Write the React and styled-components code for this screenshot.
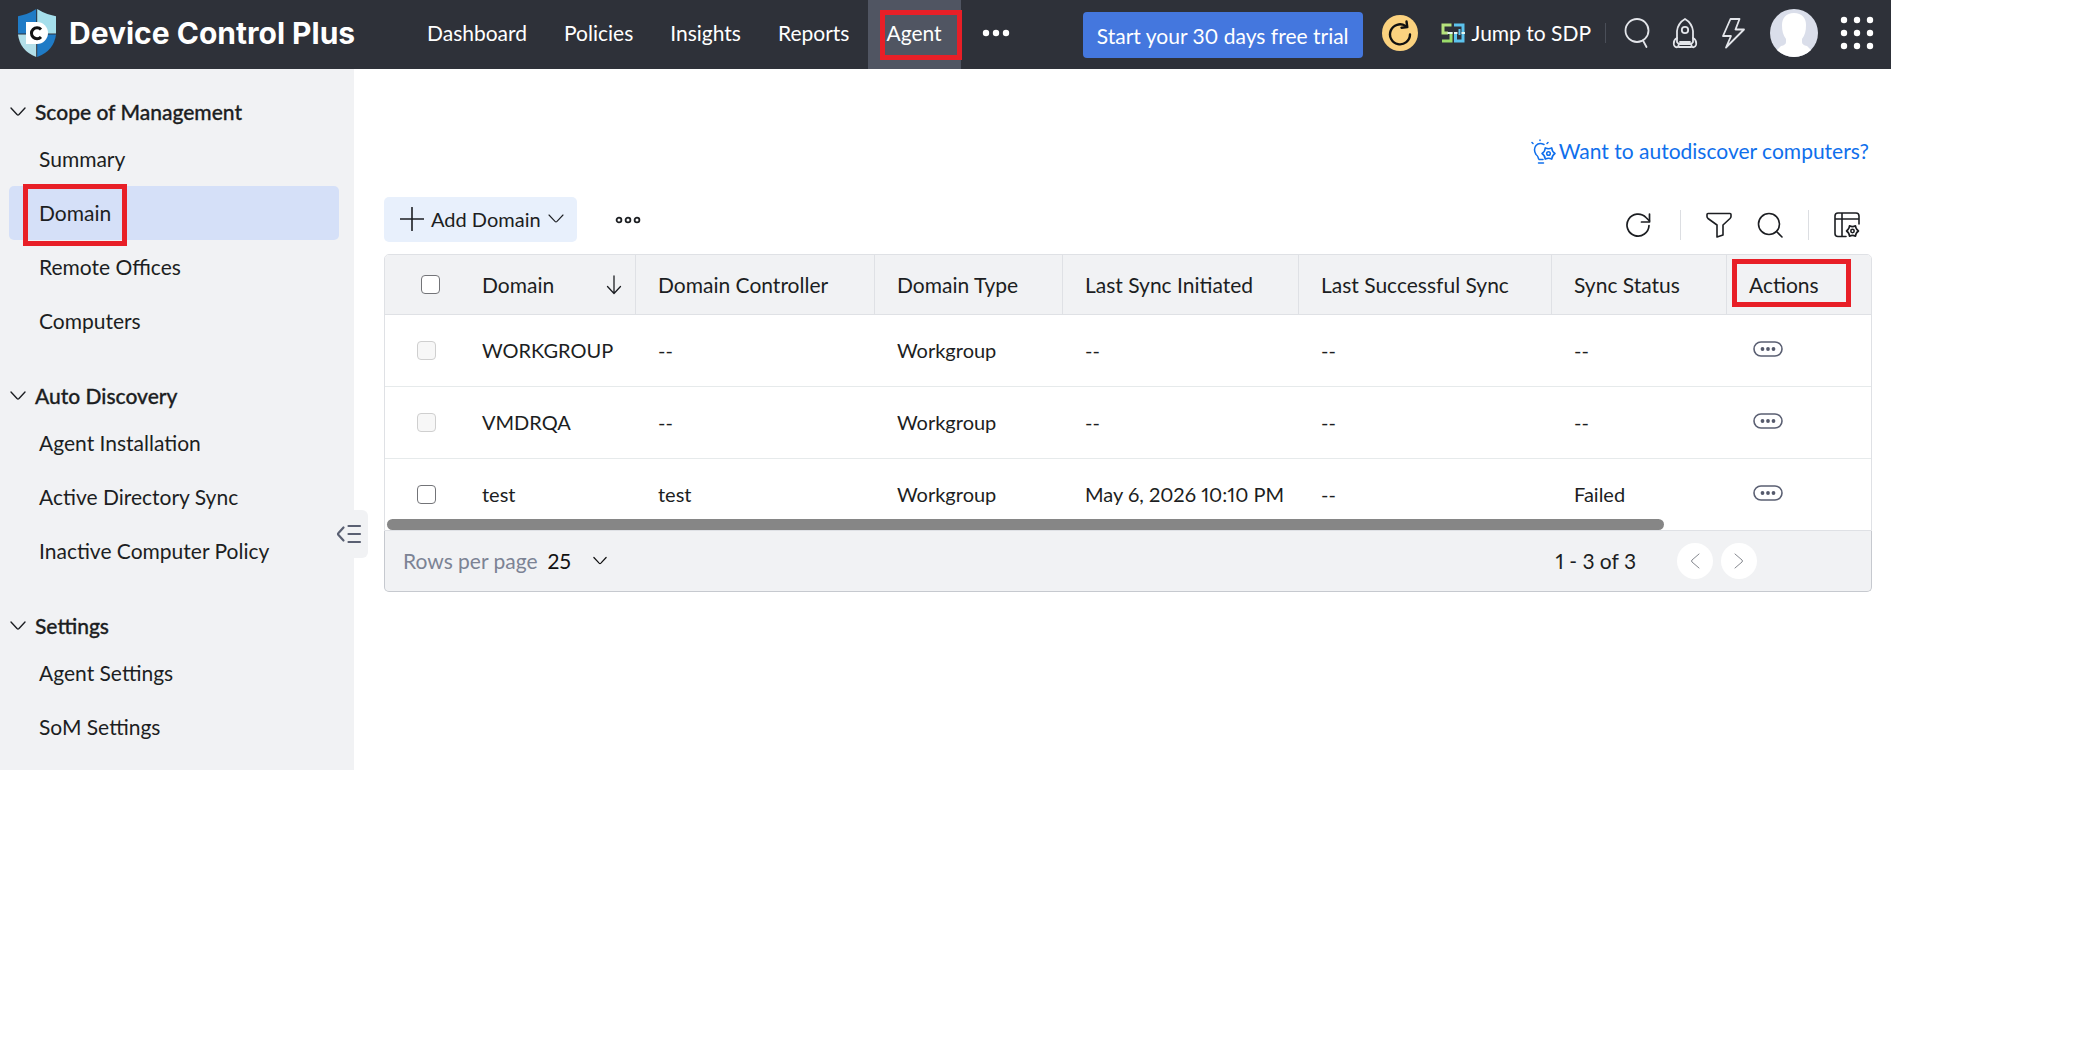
import React, { useState } from "react";
import styled, { createGlobalStyle } from "styled-components";

const menu = [
  {
    title: "Scope of Management",
    items: ["Summary", "Domain", "Remote Offices", "Computers"],
  },
  {
    title: "Auto Discovery",
    items: ["Agent Installation", "Active Directory Sync", "Inactive Computer Policy"],
  },
  {
    title: "Settings",
    items: ["Agent Settings", "SoM Settings"],
  },
];

const domains = [
  { name: "WORKGROUP", controller: "--", type: "Workgroup", initiated: "--", success: "--", status: "--", locked: true },
  { name: "VMDRQA", controller: "--", type: "Workgroup", initiated: "--", success: "--", status: "--", locked: true },
  { name: "test", controller: "test", type: "Workgroup", initiated: "May 6, 2026 10:10 PM", success: "--", status: "Failed", locked: false },
];

const Icon = ({ w = 24, h = 24, box, sw = 1.5, color = "currentColor", children }) => (
  <svg
    width={w}
    height={h}
    viewBox={box || `0 0 ${w} ${h}`}
    fill="none"
    stroke={color}
    strokeWidth={sw}
    strokeLinecap="round"
    strokeLinejoin="round"
    aria-hidden="true"
  >
    {children}
  </svg>
);

const Chevron = ({ w = 16, sw = 1.4 }) => (
  <Icon w={w} h={10} box="0 0 16 10" sw={sw}>
    <path d="M1 1l6 6.4q1 1 2 0L15 1" />
  </Icon>
);

const Shield = () => (
  <svg width="40" height="48" viewBox="0 0 40 48" aria-hidden="true">
    <path d="M19.2 0v24.6H1V7.2Q11 5.5 19.2 0z" fill="#1f7bc6" />
    <path d="M20.2 0v24.6H39V7.2Q29 5.5 20.2 0z" fill="#a5dfec" />
    <path d="M1 25.6h18.2V48Q3 42 1 25.6z" fill="#b3dfe9" />
    <path d="M39 25.6H20.2V48Q37 42 39 25.6z" fill="#1f7bc6" />
    <path d="M9 13h11a11 11 0 0 1 0 22H9z" fill="#fff" />
    <path d="M24 20.5a5.500 5.500 0 1 0 0 7.500" fill="none" stroke="#111" strokeWidth="3" />
  </svg>
);

const SdpLogo = () => (
  <svg width="24" height="20" viewBox="0 0 24 20" fill="none" strokeWidth="3" aria-hidden="true">
    <path d="M10.500 2H2v8h5" stroke="#b5e27c" />
    <path d="M1 18h9v-9" stroke="#9bdc6b" />
    <path d="M13 2h9v16h-7.500V9" stroke="#5cc3ee" />
    <path d="M18.500 6v6" stroke="#5cc3ee" strokeWidth="2" />
    <path d="M6.500 10h5M13 10h3.500M20.500 10H24" stroke="#e4f6f0" strokeWidth="2" />
  </svg>
);

// six-toothed cog, r is the outer radius
const gear = (x, y, r) => (
  <>
    <path
      d={Array(6)
        .fill(0)
        .map((_, i) => {
          const a = (i * Math.PI) / 3;
          const px = x + r * Math.cos(a);
          const py = y + r * Math.sin(a);
          const b = a + Math.PI / 6;
          const nx = x + r * Math.cos(a + Math.PI / 3);
          const ny = y + r * Math.sin(a + Math.PI / 3);
          return `${i ? "L" : "M"}${px} ${py}Q${x + r * 0.6 * Math.cos(b)} ${y + r * 0.6 * Math.sin(b)} ${nx} ${ny}`;
        })
        .join("")}
    />
    <circle cx={x} cy={y} r={r * 0.28} />
  </>
);

function TopBar() {
  return (
    <Header>
      <Brand>
        <Shield />
        <span>Device Control Plus</span>
      </Brand>
      <Nav>
        {["Dashboard", "Policies", "Insights", "Reports", "Agent"].map((name) => (
          <NavLink href="#" key={name} $active={name === "Agent"}>
            {name}
            {name === "Agent" && <Marker $inset="10px -1px 9px 12px" />}
          </NavLink>
        ))}
        <MoreButton aria-label="More">
          <svg width="28" height="8" viewBox="0 0 28 8" fill="#fff">
            <circle cx="4" cy="4" r="3.200" />
            <circle cx="14" cy="4" r="3.200" />
            <circle cx="24" cy="4" r="3.200" />
          </svg>
        </MoreButton>
      </Nav>
      <Tools>
        <TrialButton>Start your 30 days free trial</TrialButton>
        <UpdateButton aria-label="Update">
          <Icon w={24} h={26} sw={2.4}>
            <path d="M22 14.500a10 10 0 1 1-4.500-8.500" />
            <path d="M18.500 1.500l.8 5.600-5.800.6" />
          </Icon>
        </UpdateButton>
        <JumpLink href="#">
          <SdpLogo />
          Jump to SDP
        </JumpLink>
        <HeaderLine />
        <IconRow>
          <IconButton aria-label="Search">
            <Icon w={26} h={32} sw={1.8}>
              <circle cx="13" cy="13.500" r="11.500" />
              <path d="M19 23.500l3.500 6.500" />
            </Icon>
          </IconButton>
          <IconButton aria-label="What's new">
            <Icon w={26} h={32} sw={1.8}>
              <path d="M5 25V14Q6 6 13 2q7 4 8 12v11q-1 2-3 2H8q-2 0-3-2z" />
              <circle cx="13" cy="13" r="3.200" />
              <path d="M5 21q-4 2-3 7 1 3 4 2l1-3M21 21q4 2 3 7-1 3-4 2l-1-3M8 25h10M7 30h12" />
            </Icon>
          </IconButton>
          <IconButton aria-label="Quick actions">
            <Icon w={26} h={32} sw={1.8}>
              <path d="M10.500 2h9l-4 10.500H24L6 30.500l5-11.500H3z" />
            </Icon>
          </IconButton>
        </IconRow>
        <AvatarButton aria-label="Account">
          <svg width="48" height="48" viewBox="0 0 48 48">
            <circle cx="24" cy="24" r="24" fill="#dadeea" />
            <path
              d="M24 4c8 0 12 5 12 12 0 6-1 10-4 14v3q0 3 5 4l4 3.900A24 24 0 0 1 7 40.900L11 37q5-1 5-4v-3c-3-4-4-8-4-14C12 9 16 4 24 4z"
              fill="#fff"
            />
          </svg>
        </AvatarButton>
        <IconButton aria-label="Apps">
          <svg width="34" height="34" viewBox="0 0 34 34" fill="#fff">
            {[4, 17, 30].map((y) => [4, 17, 30].map((x) => <circle key={`${x}_${y}`} cx={x} cy={y} r="3.200" />))}
          </svg>
        </IconButton>
      </Tools>
    </Header>
  );
}

function SideMenu() {
  const [selected, setSelected] = useState("Domain");

  return (
    <Side>
      {menu.map((group) => (
        <Group key={group.title}>
          <GroupTitle aria-expanded="true">
            <Chevron />
            {group.title}
          </GroupTitle>
          {group.items.map((item) => (
            <SideLink href="#" key={item} $active={selected === item} onClick={() => setSelected(item)}>
              {item}
              {item === "Domain" && <Marker $inset="-2px 212px -6px 14px" />}
            </SideLink>
          ))}
        </Group>
      ))}
      <CollapseButton aria-label="Collapse menu">
        <Icon w={26} h={20} sw={2.2} color="#5a6072">
          <path d="M7.500 3.500L2.500 9q-1 1 0 2l5 5.500M12.500 2H24M12.500 10H24M12.500 18H24" />
        </Icon>
      </CollapseButton>
    </Side>
  );
}

function DomainTable() {
  return (
    <div>
      <TableWrap>
        <Table>
          <colgroup>
            <Col $w={75} />
            <Col $w={176} />
            <Col $w={239} />
            <Col $w={188} />
            <Col $w={236} />
            <Col $w={253} />
            <Col $w={175} />
            <col />
          </colgroup>
          <thead>
            <tr>
              <Th $check>
                <Check type="checkbox" aria-label="Select all" />
              </Th>
              <Th $line>
                <SortHead>
                  Domain
                  <Icon w={16} h={20} sw={1.3}>
                    <path d="M8 1v17M1.500 11.500L8 18.500l6.500-7" />
                  </Icon>
                </SortHead>
              </Th>
              <Th $line>Domain Controller</Th>
              <Th $line>Domain Type</Th>
              <Th $line>Last Sync Initiated</Th>
              <Th $line>Last Successful Sync</Th>
              <Th $line>Sync Status</Th>
              <Th>
                Actions
                <Marker $inset="4px 20px 7px 5px" />
              </Th>
            </tr>
          </thead>
          <tbody>
            {domains.map((d) => (
              <tr key={d.name}>
                <Td $check>
                  <Check type="checkbox" aria-label={`Select ${d.name}`} disabled={d.locked} />
                </Td>
                <Td>{d.name}</Td>
                <Td>{d.controller}</Td>
                <Td>{d.type}</Td>
                <Td>{d.initiated}</Td>
                <Td>{d.success}</Td>
                <Td>{d.status}</Td>
                <Td>
                  <RowAction aria-label={`Actions for ${d.name}`}>
                    <svg width="30" height="16" viewBox="0 0 30 16">
                      <rect x="1" y="1" width="28" height="14" rx="7" fill="none" stroke="#5a5f72" strokeWidth="1.600" />
                      <circle cx="9.500" cy="8" r="1.900" fill="#555a6c" />
                      <circle cx="15" cy="8" r="1.900" fill="#555a6c" />
                      <circle cx="20.500" cy="8" r="1.900" fill="#555a6c" />
                    </svg>
                  </RowAction>
                </Td>
              </tr>
            ))}
          </tbody>
        </Table>
        <ScrollThumb />
      </TableWrap>
      <Footer>
        <label htmlFor="rows">Rows per page</label>
        <SelectWrap>
          <select id="rows" defaultValue="25">
            <option>25</option>
            <option>50</option>
          </select>
          <Chevron w={14} />
        </SelectWrap>
        <Range>1 - 3 of 3</Range>
        <PageButton aria-label="Previous page">
          <Icon w={10} h={16} sw={1}>
            <path d="M9 1L2 7q-1 1 0 2l7 6" />
          </Icon>
        </PageButton>
        <PageButton aria-label="Next page">
          <Icon w={10} h={16} sw={1}>
            <path d="M1 1l7 6q1 1 0 2l-7 6" />
          </Icon>
        </PageButton>
      </Footer>
    </div>
  );
}

function App() {
  return (
    <Page>
      <GlobalStyle />
      <TopBar />
      <Body>
        <SideMenu />
        <Main>
          <HelpLink href="#">
            <Icon w={25} h={25} sw={1.5}>
              <path d="M13 5.500Q8 3 5 6.500q-3 4 0 9 2 1.500 2.500 4M8 20.500h4M7.500 24h5M1 3.500l1 1M9 1v.6M17 3.500l-1 1" />
              {gear(17.5, 14.5, 6.5)}
            </Icon>
            Want to autodiscover computers?
          </HelpLink>
          <Toolbar>
            <AddButton>
              <Icon w={24} h={24} sw={1.6}>
                <path d="M12 0.500v23M0.500 12h23" />
              </Icon>
              Add Domain
              <Chevron sw={1.1} />
            </AddButton>
            <MoreRings aria-label="More options">
              <Icon w={26} h={8} sw={1.8}>
                <circle cx="4" cy="4" r="2.400" />
                <circle cx="13" cy="4" r="2.400" />
                <circle cx="22" cy="4" r="2.400" />
              </Icon>
            </MoreRings>
            <TableTools>
              <ToolButton aria-label="Refresh">
                <Icon w={26} h={26} sw={1.7}>
                  <path d="M24 13.500a11 11 0 1 1-3-8L24.500 9" />
                  <path d="M24.500 2v8h-8" />
                </Icon>
              </ToolButton>
              <ToolLine />
              <ToolButton aria-label="Filter">
                <Icon w={26} h={26} sw={1.6}>
                  <path d="M2 1.500h22q1 0 1 1v2q0 1-1 2l-7 6.500v10l-6 2v-12L2 6.500q-1-1-1-2v-2q0-1 1-1z" />
                </Icon>
              </ToolButton>
              <ToolButton aria-label="Search table">
                <Icon w={26} h={26} sw={1.6}>
                  <circle cx="12" cy="12" r="10.500" />
                  <path d="M19.500 19.500L25 25" />
                </Icon>
              </ToolButton>
              <ToolLine />
              <ToolButton aria-label="Column settings">
                <Icon w={26} h={26} sw={1.6}>
                  <path d="M12 24.500H4q-3 0-3-3V4q0-3 3-3h18q3 0 3 3v8M1 7h24M8 1v23.500" />
                  {gear(18.5, 19, 6)}
                </Icon>
              </ToolButton>
            </TableTools>
          </Toolbar>
          <DomainTable />
        </Main>
      </Body>
    </Page>
  );
}

export default App;

const GlobalStyle = createGlobalStyle`
  * {
    box-sizing: border-box;
  }
  body {
    margin: 0;
    background: #fff;
    color: #1c1e22;
    font-family: Lato, sans-serif;
    font-size: 21px;
    line-height: 28px;
    font-variant-numeric: proportional-nums;
  }
  button, select, input {
    font: inherit;
    color: inherit;
    margin: 0;
  }
  button {
    border: 0;
    padding: 0;
    background: none;
    cursor: pointer;
  }
  a {
    color: inherit;
    text-decoration: none;
  }
  svg {
    display: block;
    flex: none;
  }
`;

const Page = styled.div`
  padding-right: 208px;
`;

const Header = styled.header`
  display: flex;
  align-items: center;
  height: 69px;
  background: #2e3139;
  color: #fff;
  white-space: nowrap;
`;

const Brand = styled.div`
  display: flex;
  align-items: center;
  gap: 12px;
  flex: 0 0 409px;
  padding: 0 0 4px 17px;
  font-family: Inter, sans-serif;
  font-size: 30px;
  font-weight: 700;
`;

const Nav = styled.nav`
  display: flex;
  height: 100%;
`;

const NavLink = styled.a`
  position: relative;
  display: flex;
  align-items: center;
  padding: 0 19px 4px 18px;
  background: ${(p) => (p.$active ? "#505562" : "transparent")};
`;

/* red rectangle laid over an item */
const Marker = styled.i`
  position: absolute;
  inset: ${(p) => p.$inset};
  border: 5px solid #e81f27;
  pointer-events: none;
`;

const MoreButton = styled.button`
  margin-left: 21px;
  padding-bottom: 3px;
`;

const Tools = styled.div`
  display: flex;
  align-items: center;
  margin-left: auto;
  padding: 0 17px 3px 0;
`;

const TrialButton = styled.button`
  height: 46px;
  margin: 4px 19px 0 0;
  padding: 2px 14px 0;
  border-radius: 4px;
  background: #4477de;
`;

const UpdateButton = styled.button`
  display: flex;
  align-items: center;
  justify-content: center;
  width: 36px;
  height: 36px;
  margin-right: 23px;
  border-radius: 50%;
  background: #fbd27f;
  color: #111;
`;

const JumpLink = styled.a`
  display: flex;
  align-items: center;
  gap: 7px;
`;

const HeaderLine = styled.span`
  width: 1px;
  height: 20px;
  margin: 0 18px 0 14px;
  background: #4a4e58;
`;

const IconRow = styled.div`
  display: flex;
  gap: 22px;
  color: #e3e5ea;
`;

const IconButton = styled.button`
  display: flex;
`;

const AvatarButton = styled.button`
  margin: 0 22px 0 24px;
`;

const Body = styled.div`
  display: flex;
  align-items: flex-start;
`;

const Side = styled.aside`
  position: relative;
  flex: 0 0 354px;
  padding: 23px 15px 16px 9px;
  background: #f1f2f4;
`;

const Group = styled.section`
  & + & {
    margin-top: 28px;
  }
`;

const GroupTitle = styled.button`
  display: flex;
  align-items: center;
  gap: 9px;
  height: 40px;
  padding-left: 1px;
  font-weight: 500;
  -webkit-text-stroke: 0.3px;
`;

const SideLink = styled.a`
  position: relative;
  display: flex;
  align-items: center;
  height: 54px;
  padding-left: 30px;
  border-radius: 5px;
  background: ${(p) => (p.$active ? "#d5e0f8" : "transparent")};
`;

/* hangs over the right edge of the menu */
const CollapseButton = styled.button`
  position: absolute;
  right: -14px;
  top: 441px;
  display: flex;
  align-items: center;
  justify-content: flex-end;
  width: 40px;
  height: 48px;
  padding-right: 6px;
  border-radius: 6px;
  background: #f1f2f4;
`;

const Main = styled.main`
  flex: 1;
  min-width: 0;
  padding: 67px 19px 0 30px;
`;

const HelpLink = styled.a`
  display: flex;
  align-items: center;
  justify-content: flex-end;
  gap: 3px;
  height: 30px;
  padding-right: 3px;
  color: #0f6fec;
`;

const Toolbar = styled.div`
  display: flex;
  align-items: center;
  margin: 31px 0 12px;
`;

const AddButton = styled.button`
  display: flex;
  align-items: center;
  gap: 7px;
  height: 45px;
  padding: 0 13px 2px 16px;
  border-radius: 5px;
  background: #e8f0fc;
  font-size: 20px;
`;

const MoreRings = styled.button`
  margin-left: 38px;
`;

const TableTools = styled.div`
  display: flex;
  align-items: center;
  margin-left: auto;
  padding: 11px 12px 0 0;
`;

const ToolButton = styled.button`
  &:first-child {
    margin-right: 4px;
  }
  & + & {
    margin-left: 25px;
  }
`;

const ToolLine = styled.span`
  width: 1px;
  height: 30px;
  margin: 0 25px;
  background: #dcdee2;
`;

const TableWrap = styled.div`
  position: relative;
  border: 1px solid #dfe1e5;
  border-radius: 5px 5px 0 0;
  overflow: hidden;
`;

const Table = styled.table`
  width: 100%;
  table-layout: fixed;
  border-collapse: separate;
  border-spacing: 0;
  text-align: left;
  white-space: nowrap;
`;

const Col = styled.col`
  width: ${(p) => p.$w}px;
`;

const Th = styled.th`
  position: relative;
  height: 60px;
  padding: 0 0 0 ${(p) => (p.$check ? 36 : 22)}px;
  border-bottom: 1px solid #dfe1e5;
  border-right: ${(p) => (p.$line ? "1px solid #dfe1e5" : "0")};
  background: #f1f2f4;
  font-weight: 400;
`;

const Td = styled.td`
  height: 72px;
  padding: 0 0 ${(p) => (p.$check ? 0 : 2)}px ${(p) => (p.$check ? 32 : 22)}px;
  border-bottom: 1px solid #e6eaeb;
  font-size: 20px;

  tr:last-child > & {
    height: 71px;
    border-bottom: 0;
  }
`;

const SortHead = styled.div`
  display: flex;
  align-items: center;
  justify-content: space-between;
  padding-right: 13px;
`;

const Check = styled.input`
  appearance: none;
  display: block;
  width: 19px;
  height: 19px;
  border: 1px solid ${(p) => (p.disabled ? "#cfcfcf" : "#737478")};
  border-radius: 4px;
  background: ${(p) => (p.disabled ? "#f7f7f7" : "#fff")};
`;

const RowAction = styled.button`
  display: block;
  margin: 0 0 2px 4px;
`;

const ScrollThumb = styled.div`
  position: absolute;
  left: 2px;
  right: 207px;
  bottom: 0;
  height: 11px;
  border-radius: 6px;
  background: #868686;
`;

const Footer = styled.footer`
  display: flex;
  align-items: center;
  height: 61px;
  padding: 0 114px 0 18px;
  border: 1px solid #c6c9cf;
  border-top: 0;
  border-radius: 0 0 5px 5px;
  background: #f1f2f4;

  label {
    color: #7c8394;
  }
`;

const SelectWrap = styled.div`
  display: flex;
  align-items: center;
  margin-left: 10px;
  color: #111;

  select {
    appearance: none;
    width: 45px;
    padding: 0;
    border: 0;
    background: transparent;
  }
`;

const Range = styled.span`
  margin: 0 41px 0 auto;
`;

const PageButton = styled.button`
  display: flex;
  align-items: center;
  justify-content: center;
  width: 36px;
  height: 36px;
  border-radius: 50%;
  background: #fff;
  color: #85888f;

  & + & {
    margin-left: 8px;
  }
`;
